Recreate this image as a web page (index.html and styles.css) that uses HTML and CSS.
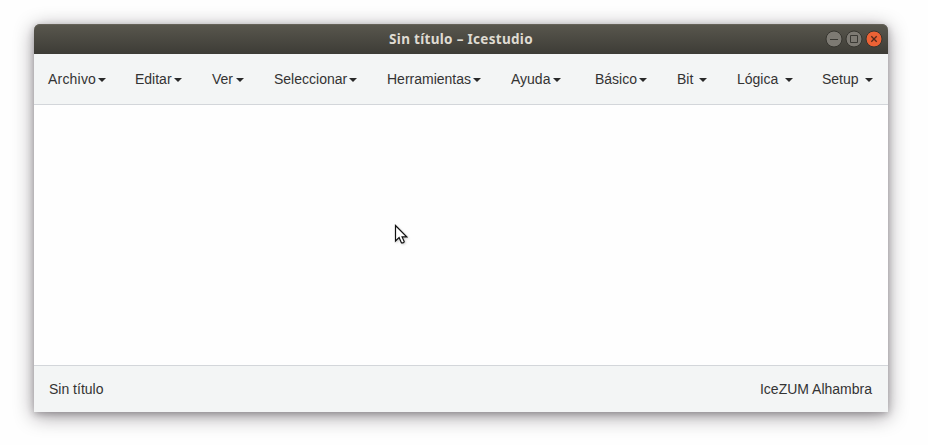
FILE: index.html
```html
<!DOCTYPE html>
<html lang="es">
<head>
<meta charset="utf-8">
<title>Sin título – Icestudio</title>
<link rel="stylesheet" href="styles.css">
</head>
<body>
<main class="window">
  <header class="titlebar">
    <h1 class="title">Sin título – Icestudio</h1>
    <div class="controls">
      <svg class="control" viewBox="0 0 18 18"><circle class="disc" cx="9" cy="9" r="8"/><path class="glyph" d="M5 9.5h8"/></svg>
      <svg class="control" viewBox="0 0 18 18"><circle class="disc" cx="9" cy="9" r="8"/><path class="glyph" d="M5.5 5.5h7v7h-7z"/></svg>
      <svg class="control close" viewBox="0 0 18 18"><circle class="disc" cx="9" cy="9" r="8"/><path class="glyph" d="M6.3 6.3l5.4 5.4M11.7 6.3l-5.4 5.4"/></svg>
    </div>
  </header>
  <nav class="menubar">
    <div class="group">
      <span class="item archivo"><span class="label">Archivo</span><i class="caret"></i></span>
      <span class="item editar"><span class="label">Editar</span><i class="caret"></i></span>
      <span class="item ver"><span class="label">Ver</span><i class="caret"></i></span>
      <span class="item seleccionar"><span class="label">Seleccionar</span><i class="caret"></i></span>
      <span class="item herramientas"><span class="label">Herramientas</span><i class="caret"></i></span>
      <span class="item ayuda"><span class="label">Ayuda</span><i class="caret"></i></span>
    </div>
    <div class="group">
      <span class="item basico"><span class="label">Básico</span><i class="caret"></i></span>
      <span class="item bit"><span class="label">Bit</span><i class="caret"></i></span>
      <span class="item logica"><span class="label">Lógica</span><i class="caret"></i></span>
      <span class="item setup"><span class="label">Setup</span><i class="caret"></i></span>
    </div>
  </nav>
  <section class="canvas"></section>
  <footer class="statusbar"><span>Sin título</span><span class="board">IceZUM Alhambra</span></footer>
  <svg class="pointer" viewBox="0 0 14 21"><path d="M1.5 1.5v15.5l3.6-3.4 2.3 5.2q2.4.6 2.8-1.2l-2.1-4.7h4.6z"/></svg>
</main>
</body>
</html>
```

FILE: styles.css
```css
body {
  margin: 0;
  height: 445px;
  overflow: hidden;
  background: #fefefe;
  font-family: "Liberation Sans", Arial, sans-serif;
  font-size: 14px;
  color: #333;
}

.window {
  position: relative;
  display: flex;
  flex-direction: column;
  width: 854px;
  height: 388px;
  margin: 24px 0 0 34px;
  border-radius: 6px 6px 0 0;
  background: #fefefe;
  box-shadow: 0 4px 20px rgba(20, 10, 20, .42), 0 2px 7px rgba(20, 10, 20, .25);
}

.titlebar {
  display: grid;
  grid-template-columns: 1fr auto 1fr;
  align-items: center;
  height: 30px;
  box-sizing: border-box;
  border-radius: 6px 6px 0 0;
  background: linear-gradient(#59574e, #3d3c36);
  box-shadow: inset 0 1px #656258;
}

.title {
  grid-column: 2;
  margin: 0;
  font: bold 13.5px/30px "Noto Sans", sans-serif;
  letter-spacing: .3px;
  color: #dfdbd2;
}

.controls {
  display: flex;
  justify-content: flex-end;
  gap: 2px;
  padding-right: 5px;
}

.control {
  width: 18px;
  height: 18px;
}

.disc {
  fill: #7d7a73;
  stroke: #36352f;
}

.glyph {
  fill: none;
  stroke: #3a3934;
}

.close .disc {
  fill: #ec6235;
}

.close .glyph {
  stroke: #54291b;
  stroke-width: 1.3;
}

.menubar {
  display: flex;
  justify-content: space-between;
  height: 51px;
  box-sizing: border-box;
  padding: 0 15px 0 14px;
  background: #f3f5f5;
  border-bottom: 1px solid #d3d6da;
}

.group {
  display: flex;
  gap: 30px;
}

.item {
  display: flex;
  justify-content: space-between;
  align-items: center;
  white-space: nowrap;
}

.caret {
  border: 4px solid transparent;
  border-top-color: #292929;
  border-bottom: 0;
  margin-top: 2px;
}

.archivo { width: 58px; margin-right: -1px; letter-spacing: .2px; }
.editar { width: 47px; }
.ver { width: 32px; }
.seleccionar { width: 83px; }
.herramientas { width: 94px; }
.ayuda { width: 50px; }
.basico { width: 52px; }
.bit { width: 30px; }
.logica { width: 56px; }
.setup { width: 51px; margin-left: -1px; }

.canvas {
  flex: 1;
}

.statusbar {
  display: flex;
  justify-content: space-between;
  align-items: center;
  height: 47px;
  box-sizing: border-box;
  padding: 0 16px 0 15px;
  background: #f3f5f5;
  border-top: 1px solid #d3d6da;
}

.pointer {
  position: absolute;
  left: 360px;
  top: 200px;
  width: 14px;
  height: 21px;
  fill: #fff;
  stroke: #111;
  stroke-width: 1.2;
  filter: drop-shadow(1px 1px 1px rgba(0, 0, 0, .2));
}
```
